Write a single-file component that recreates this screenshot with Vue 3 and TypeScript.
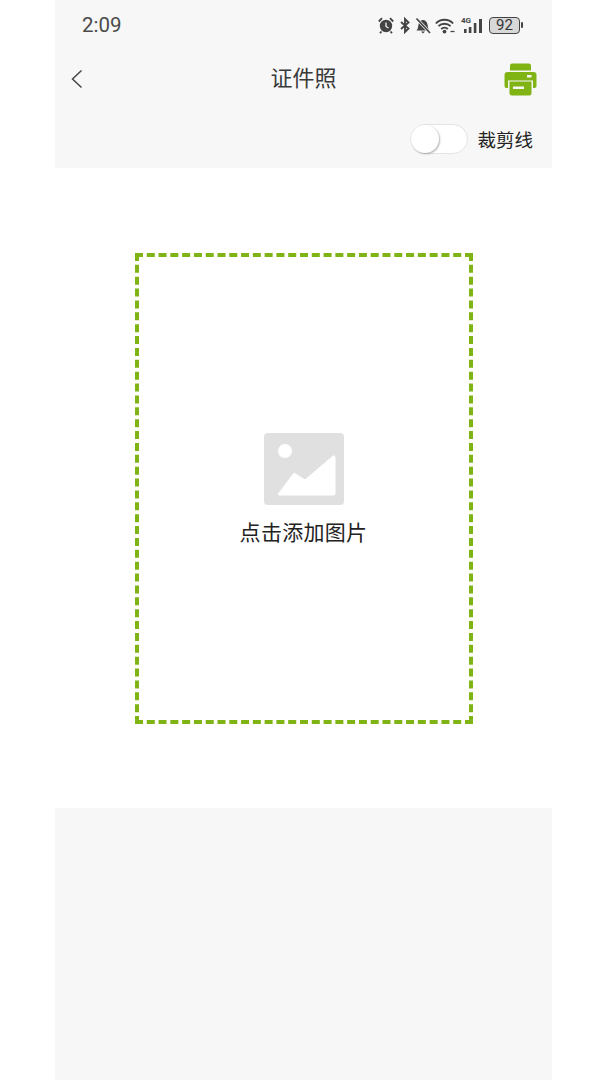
<script setup lang="ts">
const title: string = '证件照'
</script>

<template>
  <div class="page">
    <header class="head">
      <div class="status">
        <span class="time">2:09</span>
        <div class="sys">
          <svg width="16" height="17" viewBox="0 0 16 17"><circle cx="8" cy="9" r="6.200" fill="#444"/><path d="M8 5.500V9.500l2.500 1.500" stroke="#f7f7f7" stroke-width="1.300" fill="none"/><path d="M.8 4.500 4 1.200M15.200 4.500 12 1.200M3.500 14.500 2 16.200M12.500 14.500 14 16.200" stroke="#444" stroke-width="1.800"/></svg>
          <svg class="bt" width="10" height="17" viewBox="0 0 10 17"><path d="M1 5 8.500 11.500 5 15V2L8.500 5.500 1 12" stroke="#444" stroke-width="1.900" fill="none"/></svg>
          <svg class="bell" width="16" height="17" viewBox="0 0 16 17"><path d="M1.500 13.500c1.500-1.500 1.500-3.500 2-6C4 4.500 6 3 8 3s4 1.500 4.500 4.500c.5 2.500.5 4.500 2 6zM6 14.500h4L8 16.500z" fill="#444"/><path d="M1.500 1.500 15 16" stroke="#f7f7f7" stroke-width="3"/><path d="M1.500 1.500 15 16" stroke="#444" stroke-width="1.700"/></svg>
          <svg class="wifi" width="20" height="17" viewBox="0 0 20 17"><path d="M.8 6.500c4.700-5 12.700-5 17.400 0M3.400 9.200c3.300-3.300 8.900-3.300 12.200 0M6.200 12c1.800-1.700 4.800-1.700 6.600 0" stroke="#444" stroke-width="1.800" fill="none"/><circle cx="9.500" cy="14.600" r="1.900" fill="#444"/><path d="M15.500 14.500h4" stroke="#444" stroke-width="1.300"/></svg>
          <div class="net">
            <span class="four">4G</span>
            <svg width="22" height="17" viewBox="0 0 22 17"><path d="M3 12h2.600v4H3zM7.800 10h2.600v6H7.800zM12.800 6h2.600v10h-2.600zM18 2h3v14h-3z" fill="#444"/></svg>
          </div>
          <div class="battery"><span class="level">92</span></div>
          <span class="nub"></span>
        </div>
      </div>
      <div class="nav">
        <svg class="back" width="14" height="20" viewBox="0 0 14 20"><path d="M11.500 1.500 2.500 10l9 8.500" stroke="#444" stroke-width="1.500" fill="none"/></svg>
        <span class="title">{{ title }}</span>
        <svg class="printer" width="33" height="33" viewBox="0 0 33 33">
          <path d="M6 2.500a2 2 0 0 1 2-2h17a2 2 0 0 1 2 2V7.500H6z" fill="#7fb414"/>
          <path fill-rule="evenodd" d="M3.500 9h26a3 3 0 0 1 3 3v11a2 2 0 0 1-2 2H29V17.500H4V25H2.500a2 2 0 0 1-2-2V12a3 3 0 0 1 3-3zM23 12v2.500h4.500V12z" fill="#7fb414"/>
          <path fill-rule="evenodd" d="M5.500 18.500h22V30a2.500 2.500 0 0 1-2.500 2.500H8A2.500 2.500 0 0 1 5.500 30zM9 23.500v2.500h11v-2.500z" fill="#7fb414"/>
        </svg>
      </div>
      <div class="tools">
        <span class="switch"><span class="knob"></span></span>
        <span class="cut">裁剪线</span>
      </div>
    </header>
    <main class="canvas">
      <div class="frame">
        <svg width="80" height="72" viewBox="0 0 80 72">
          <rect width="80" height="72" rx="4" fill="#e0e0e0"/>
          <circle cx="21" cy="18" r="7" fill="#fff"/>
          <path d="M15 60 30 40 41 47 69 23a1.500 1.500 0 0 1 2 1V61a1 1 0 0 1-1 1H15a1.500 1.500 0 0 1 0-2z" fill="#fff" stroke="#fff" stroke-width="1" stroke-linejoin="round"/>
        </svg>
        <span class="hint">点击添加图片</span>
      </div>
    </main>
    <footer class="foot"></footer>
  </div>
</template>

<style>
html, body { background: #fff; }
</style>

<style scoped>
.page {
  width: 497px;
  height: 1080px;
  margin-left: 55px;
  display: flex;
  flex-direction: column;
  background: #f7f7f7;
  font-family: "Noto Sans CJK SC", "Noto Sans", sans-serif;
  overflow: hidden;
}
.head { height: 168px; display: flex; flex-direction: column; }
.status {
  height: 50px;
  padding: 0 29px 0 27px;
  display: flex;
  align-items: center;
  justify-content: space-between;
}
.time { font-family: Roboto, sans-serif; font-size: 20.500px; color: #4a4a4a; }
.sys { display: flex; align-items: center; }
.bt { margin-left: 6px; }
.bell { margin-left: 5px; }
.wifi { margin-left: 4px; }
.net { position: relative; display: flex; margin-left: 6px; }
.four { position: absolute; left: 0; top: -1px; font: 700 8px/9px Roboto, sans-serif; color: #444; }
.battery {
  width: 31px; height: 17px; margin-left: 6px; box-sizing: border-box;
  border: 1.500px solid #444; border-radius: 4px; background: #d8d8d8;
  display: flex; align-items: center; justify-content: center;
}
.level { font: 15px/15px Roboto, sans-serif; color: #333; }
.nub { width: 2px; height: 6px; margin-left: 1px; background: #444; border-radius: 1px; }
.nav {
  height: 58px;
  padding: 0 15px 0 15px;
  display: flex;
  align-items: center;
  justify-content: space-between;
  position: relative;
}
.title {
  position: absolute; left: 0; right: 0; top: 11px; text-align: center;
  font-size: 22px; line-height: 30px; color: #3a3a3a;
}
.tools {
  height: 60px;
  padding: 1px 19px 0 0;
  display: flex;
  align-items: center;
  justify-content: flex-end;
  gap: 9px;
  box-sizing: border-box;
}
.switch {
  width: 58px; height: 30px; box-sizing: border-box;
  border: 1px solid #e4e4e4; border-radius: 15px; background: #fff;
  display: block; position: relative;
}
.knob {
  position: absolute; left: 0; top: 0; width: 28px; height: 28px;
  border-radius: 50%; background: #fff;
  box-shadow: 1px 1px 2px rgba(0, 0, 0, .3);
}
.cut { font-size: 18.500px; line-height: 26px; color: #222; }
.canvas {
  height: 640px;
  background: #fff;
  display: flex;
  align-items: center;
  justify-content: center;
}
.frame {
  width: 338px; height: 471px; box-sizing: border-box;
  border: 4px dashed #7fb414;
  padding-top: 2px;
  display: flex; flex-direction: column; align-items: center; justify-content: center;
  gap: 11px;
}
.hint { font-size: 21px; line-height: 30px; color: #222; letter-spacing: .3px; }
.foot { flex: 1; }
</style>
